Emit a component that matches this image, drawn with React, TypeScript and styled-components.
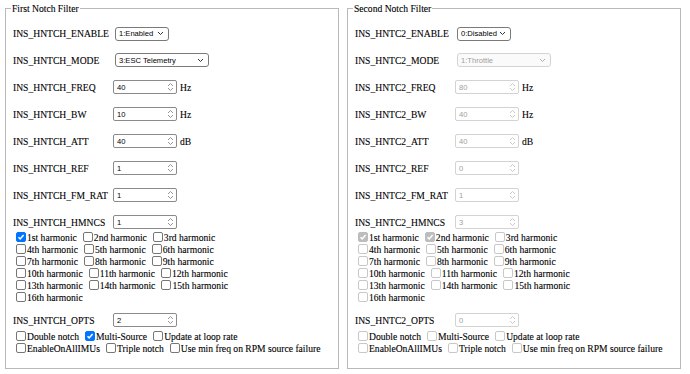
import styled, { createGlobalStyle } from "styled-components";

const GlobalStyle = createGlobalStyle`
  html, body {
    margin: 0;
    padding: 0;
    background: #fff;
  }
  body {
    font-family: "Liberation Serif", "Times New Roman", serif;
    font-size: 9.6px;
    color: #000;
  }
`;

type Param = {
  name: string;
  kind: "select" | "number";
  value: string;
  unit?: string;
  wide?: boolean;
};

type Panel = {
  title: string;
  prefix: string;
  disabled: boolean;
  params: Param[];
  harmonics: number[];
  opts: string;
  optsChecked: string[];
};

const ordinal = (n: number) => {
  if (n === 1) return "1st";
  if (n === 2) return "2nd";
  if (n === 3) return "3rd";
  return n + "th";
};

const harmonicRows = [
  [1, 2, 3],
  [4, 5, 6],
  [7, 8, 9],
  [10, 11, 12],
  [13, 14, 15],
  [16],
];

const optionRows = [
  ["Double notch", "Multi-Source", "Update at loop rate"],
  ["EnableOnAllIMUs", "Triple notch", "Use min freq on RPM source failure"],
];

const panels: Panel[] = [
  {
    title: "First Notch Filter",
    prefix: "INS_HNTCH",
    disabled: false,
    params: [
      { name: "ENABLE", kind: "select", value: "1:Enabled" },
      { name: "MODE", kind: "select", value: "3:ESC Telemetry", wide: true },
      { name: "FREQ", kind: "number", value: "40", unit: "Hz" },
      { name: "BW", kind: "number", value: "10", unit: "Hz" },
      { name: "ATT", kind: "number", value: "40", unit: "dB" },
      { name: "REF", kind: "number", value: "1" },
      { name: "FM_RAT", kind: "number", value: "1" },
      { name: "HMNCS", kind: "number", value: "1" },
    ],
    harmonics: [1],
    opts: "2",
    optsChecked: ["Multi-Source"],
  },
  {
    title: "Second Notch Filter",
    prefix: "INS_HNTC2",
    disabled: true,
    params: [
      { name: "ENABLE", kind: "select", value: "0:Disabled" },
      { name: "MODE", kind: "select", value: "1:Throttle", wide: true },
      { name: "FREQ", kind: "number", value: "80", unit: "Hz" },
      { name: "BW", kind: "number", value: "40", unit: "Hz" },
      { name: "ATT", kind: "number", value: "40", unit: "dB" },
      { name: "REF", kind: "number", value: "0" },
      { name: "FM_RAT", kind: "number", value: "1" },
      { name: "HMNCS", kind: "number", value: "3" },
    ],
    harmonics: [1, 2],
    opts: "0",
    optsChecked: [],
  },
];

const Spinner = ({ dim }: { dim: boolean }) => (
  <svg width="7" height="10" viewBox="0 0 7 10">
    <path
      d="M1 4 L3.5 1.5 L6 4 M1 6 L3.5 8.5 L6 6"
      fill="none"
      stroke={dim ? "#c4c4c4" : "#8a8a8a"}
      strokeWidth="0.9"
    />
  </svg>
);

const Chevron = ({ dim }: { dim: boolean }) => (
  <svg width="7" height="5" viewBox="0 0 7 5">
    <path
      d="M1 1 L3.5 3.5 L6 1"
      fill="none"
      stroke={dim ? "#b0b0b0" : "#333"}
      strokeWidth="1"
    />
  </svg>
);

const Tick = () => (
  <svg width="8" height="8" viewBox="0 0 8 8">
    <path
      d="M1.5 4.2 L3.2 5.9 L6.6 2"
      fill="none"
      stroke="#fff"
      strokeWidth="1.5"
    />
  </svg>
);

const Check = ({
  label,
  checked,
  disabled,
}: {
  label: string;
  checked: boolean;
  disabled: boolean;
}) => (
  <Item>
    <Box $checked={checked} $disabled={disabled}>
      {checked && <Tick />}
    </Box>
    <span>{label}</span>
  </Item>
);

const NotchPanel = ({ panel }: { panel: Panel }) => {
  const d = panel.disabled;
  return (
    <Fieldset>
      <Legend>{panel.title}</Legend>
      {panel.params.map((p, i) => (
        <Row key={p.name} $first={i === 0}>
          <Label>
            {panel.prefix}_{p.name}
          </Label>
          {p.kind === "select" ? (
            <Select $wide={!!p.wide} $disabled={d && i > 0}>
              <span>{p.value}</span>
              <Chevron dim={d && i > 0} />
            </Select>
          ) : (
            <NumberInput $disabled={d}>
              <span>{p.value}</span>
              <Spinner dim={d} />
            </NumberInput>
          )}
          {p.unit && <Unit>{p.unit}</Unit>}
        </Row>
      ))}
      <Checks>
        {harmonicRows.map((row, r) => (
          <CheckLine key={r}>
            {row.map((n) => (
              <Check
                key={n}
                label={ordinal(n) + " harmonic"}
                checked={panel.harmonics.includes(n)}
                disabled={d}
              />
            ))}
          </CheckLine>
        ))}
      </Checks>
      <Row $gap>
        <Label>{panel.prefix}_OPTS</Label>
        <NumberInput $disabled={d}>
          <span>{panel.opts}</span>
          <Spinner dim={d} />
        </NumberInput>
      </Row>
      <Options>
        {optionRows.map((row, r) => (
          <CheckLine key={r}>
            {row.map((o) => (
              <Check
                key={o}
                label={o}
                checked={panel.optsChecked.includes(o)}
                disabled={d}
              />
            ))}
          </CheckLine>
        ))}
      </Options>
    </Fieldset>
  );
};

export default function App() {
  return (
    <>
      <GlobalStyle />
      <Page>
        {panels.map((p) => (
          <NotchPanel key={p.title} panel={p} />
        ))}
      </Page>
    </>
  );
}

const Page = styled.div`
  display: flex;
  gap: 8px;
  padding: 3px 9px 0 5px;
  width: 690px;
  box-sizing: border-box;
  font-family: "Liberation Serif", "Times New Roman", serif;
  font-size: 9.6px;
  color: #000;
  -webkit-text-stroke: 0.1px #000;
`;

const Fieldset = styled.fieldset`
  flex: 1;
  min-width: 0;
  margin: 0;
  height: 366px;
  box-sizing: border-box;
  border: 1px solid #b9b9b9;
  padding: 0 8px 0 7px;
  font-family: "Liberation Serif", "Times New Roman", serif;
`;

const Legend = styled.legend`
  padding: 0 1px;
  margin-left: -2px;
  font-size: 9.6px;
  line-height: 11px;
`;

const Row = styled.div<{ $first?: boolean; $gap?: boolean }>`
  display: flex;
  align-items: center;
  height: 14px;
  margin-top: ${({ $first, $gap }) =>
    $first ? "12.5px" : $gap ? "10px" : "12.95px"};
  white-space: nowrap;
`;

const Label = styled.span`
  width: 100px;
  flex: none;
`;

const Select = styled.div<{ $wide: boolean; $disabled: boolean }>`
  display: flex;
  align-items: center;
  justify-content: space-between;
  box-sizing: border-box;
  margin-left: 2px;
  width: ${({ $wide }) => ($wide ? "94px" : "54px")};
  height: 14px;
  padding: 0 4px 0 3px;
  border: 1px solid ${({ $disabled }) => ($disabled ? "#d3d3d3" : "#7a7a7a")};
  border-radius: 3px;
  background: ${({ $disabled }) => ($disabled ? "#fafafa" : "#fff")};
  color: ${({ $disabled }) => ($disabled ? "#a0a0a0" : "#000")};
  -webkit-text-stroke: 0;
  font-family: "Liberation Sans", Arial, sans-serif;
  font-size: 7.6px;
`;

const NumberInput = styled.div<{ $disabled: boolean }>`
  display: flex;
  align-items: center;
  justify-content: space-between;
  box-sizing: border-box;
  width: 64px;
  height: 14px;
  padding: 0 2px 0 3px;
  border: 1px solid ${({ $disabled }) => ($disabled ? "#d3d3d3" : "#8a8a8a")};
  border-radius: 2px;
  background: #fff;
  color: ${({ $disabled }) => ($disabled ? "#a0a0a0" : "#000")};
  -webkit-text-stroke: 0;
  font-family: "Liberation Sans", Arial, sans-serif;
  font-size: 7.6px;
`;

const Unit = styled.span`
  margin-left: 3px;
`;

const Checks = styled.div`
  margin-top: 2px;
`;

const Options = styled.div`
  margin-top: 3px;
`;

const CheckLine = styled.div`
  display: flex;
  align-items: center;
  height: 12px;
  white-space: nowrap;
`;

const Item = styled.span`
  display: inline-flex;
  align-items: center;
  margin-right: 3px;
`;

const Box = styled.span<{ $checked: boolean; $disabled: boolean }>`
  display: inline-flex;
  align-items: center;
  justify-content: center;
  box-sizing: border-box;
  width: 10px;
  height: 10px;
  margin: 0 1px 0 3px;
  border-radius: 2px;
  border: 1px solid
    ${({ $checked, $disabled }) =>
      $checked ? ($disabled ? "#bdbdbd" : "#0075ff") : $disabled ? "#c8c8c8" : "#767676"};
  background: ${({ $checked, $disabled }) =>
    $checked ? ($disabled ? "#bdbdbd" : "#0075ff") : "#fff"};
`;
